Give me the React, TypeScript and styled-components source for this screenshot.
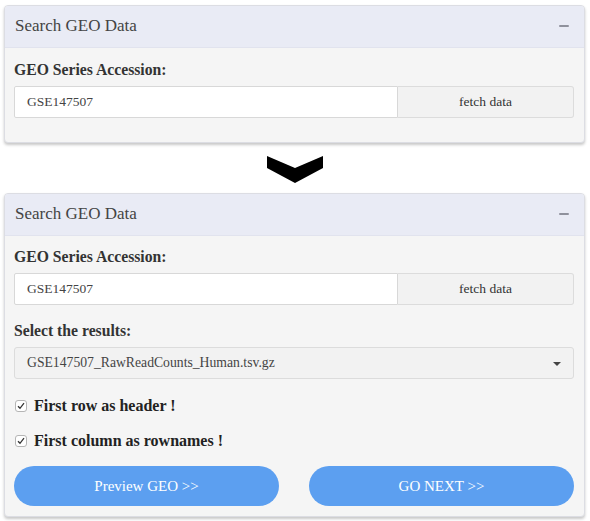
import React from "react";
import styled, { createGlobalStyle } from "styled-components";

const GlobalStyle = createGlobalStyle`
  html, body {
    margin: 0;
    padding: 0;
    background: #ffffff;
    font-family: "Liberation Serif", "Times New Roman", serif;
    color: #333;
  }
`;

const Page = styled.div`
  width: 590px;
  height: 521px;
  display: flex;
  flex-direction: column;
  padding: 5px 5px 0 4px;
  box-sizing: border-box;
`;

const Panel = styled.div`
  background: #f5f5f5;
  border: 1px solid #dcdde3;
  border-radius: 4px;
  box-shadow: 0 2px 3px rgba(0, 0, 0, 0.22);
  overflow: hidden;
`;

const PanelHeader = styled.div`
  height: 42px;
  box-sizing: border-box;
  background: #e9ebf5;
  border-bottom: 1px solid #e1e3ee;
  display: flex;
  align-items: center;
  justify-content: space-between;
  padding: 0 15px 2px 10px;
  font-size: 17px;
  color: #444;
`;

const Minus = styled.span`
  width: 10px;
  height: 2px;
  background: #8f919c;
  border-radius: 1px;
`;

const PanelBody = styled.div<{ $top: number; $bottom: number }>`
  padding: ${(p) => p.$top}px 10px ${(p) => p.$bottom}px 9px;
  display: flex;
  flex-direction: column;
`;

const Group = styled.div<{ $gap?: number }>`
  display: flex;
  flex-direction: column;
  margin-bottom: ${(p) => p.$gap ?? 0}px;
`;

const Label = styled.div`
  font-size: 15.7px;
  font-weight: bold;
  line-height: 17px;
  color: #333;
  margin-bottom: 8px;
`;

const InputRow = styled.div`
  display: flex;
  height: 32px;
`;

const TextInput = styled.div`
  flex: 0 0 384px;
  box-sizing: border-box;
  background: #fff;
  border: 1px solid #d8d8d8;
  border-radius: 2px 0 0 2px;
  display: flex;
  align-items: center;
  padding-left: 12px;
  font-size: 13.5px;
  color: #444;
`;

const FetchButton = styled.div`
  flex: 1;
  box-sizing: border-box;
  background: #f2f2f2;
  border: 1px solid #dcdcdc;
  border-left: none;
  border-radius: 0 3px 3px 0;
  display: flex;
  align-items: center;
  justify-content: center;
  font-size: 13.5px;
  color: #333;
`;

const Select = styled.div`
  height: 32px;
  box-sizing: border-box;
  background: #f2f2f2;
  border: 1px solid #dcdcdc;
  border-radius: 3px;
  display: flex;
  align-items: center;
  justify-content: space-between;
  padding: 0 12px 0 12px;
  font-size: 13.7px;
  color: #444;
`;

const Caret = styled.span`
  width: 0;
  height: 0;
  border-left: 4px solid transparent;
  border-right: 4px solid transparent;
  border-top: 4px solid #444;
  margin-top: 2px;
`;

const CheckRow = styled.label<{ $gap: number }>`
  display: flex;
  align-items: center;
  height: 20px;
  margin-bottom: ${(p) => p.$gap}px;
  font-size: 16px;
  font-weight: bold;
  color: #222;
`;

const Box = styled.span`
  width: 12px;
  height: 12px;
  box-sizing: border-box;
  border: 1px solid #b5b5b5;
  border-radius: 3px;
  background: #fff;
  margin: 0 7px 0 1px;
  display: flex;
  align-items: center;
  justify-content: center;
`;

const ButtonRow = styled.div`
  display: grid;
  grid-template-columns: 1fr 1fr;
  gap: 30px;
`;

const PillButton = styled.div`
  height: 40px;
  border-radius: 20px;
  background: #5c9ff0;
  color: #fff;
  display: flex;
  align-items: center;
  justify-content: center;
  font-size: 15px;
`;

const ArrowWrap = styled.div`
  display: flex;
  justify-content: center;
  padding: 13px 0 9px;
`;

const Header = () => (
  <PanelHeader>
    <span>Search GEO Data</span>
    <Minus />
  </PanelHeader>
);

const Accession = ({ gap }: { gap?: number }) => (
  <Group $gap={gap}>
    <Label>GEO Series Accession:</Label>
    <InputRow>
      <TextInput>GSE147507</TextInput>
      <FetchButton>fetch data</FetchButton>
    </InputRow>
  </Group>
);

const Check = () => (
  <Box>
    <svg width="8" height="8" viewBox="0 0 8 8">
      <path d="M1 4.2 L3 6.3 L7 1.2" fill="none" stroke="#333" strokeWidth="1.3" />
    </svg>
  </Box>
);

export default function App() {
  return (
    <>
      <GlobalStyle />
      <Page>
        <Panel>
          <Header />
          <PanelBody $top={13} $bottom={24}>
            <Accession />
          </PanelBody>
        </Panel>
        <ArrowWrap>
          <svg width="56" height="28" viewBox="0 0 56 28">
            <polygon points="0,0 28,12 56,0 56,12 28,27 0,12" fill="#000" />
          </svg>
        </ArrowWrap>
        <Panel>
          <Header />
          <PanelBody $top={12} $bottom={10}>
            <Accession gap={17} />
            <Group $gap={17}>
              <Label>Select the results:</Label>
              <Select>
                <span>GSE147507_RawReadCounts_Human.tsv.gz</span>
                <Caret />
              </Select>
            </Group>
            <CheckRow $gap={15}>
              <Check />
              First row as header !
            </CheckRow>
            <CheckRow $gap={15}>
              <Check />
              First column as rownames !
            </CheckRow>
            <ButtonRow>
              <PillButton>Preview GEO &gt;&gt;</PillButton>
              <PillButton>GO NEXT &gt;&gt;</PillButton>
            </ButtonRow>
          </PanelBody>
        </Panel>
      </Page>
    </>
  );
}
